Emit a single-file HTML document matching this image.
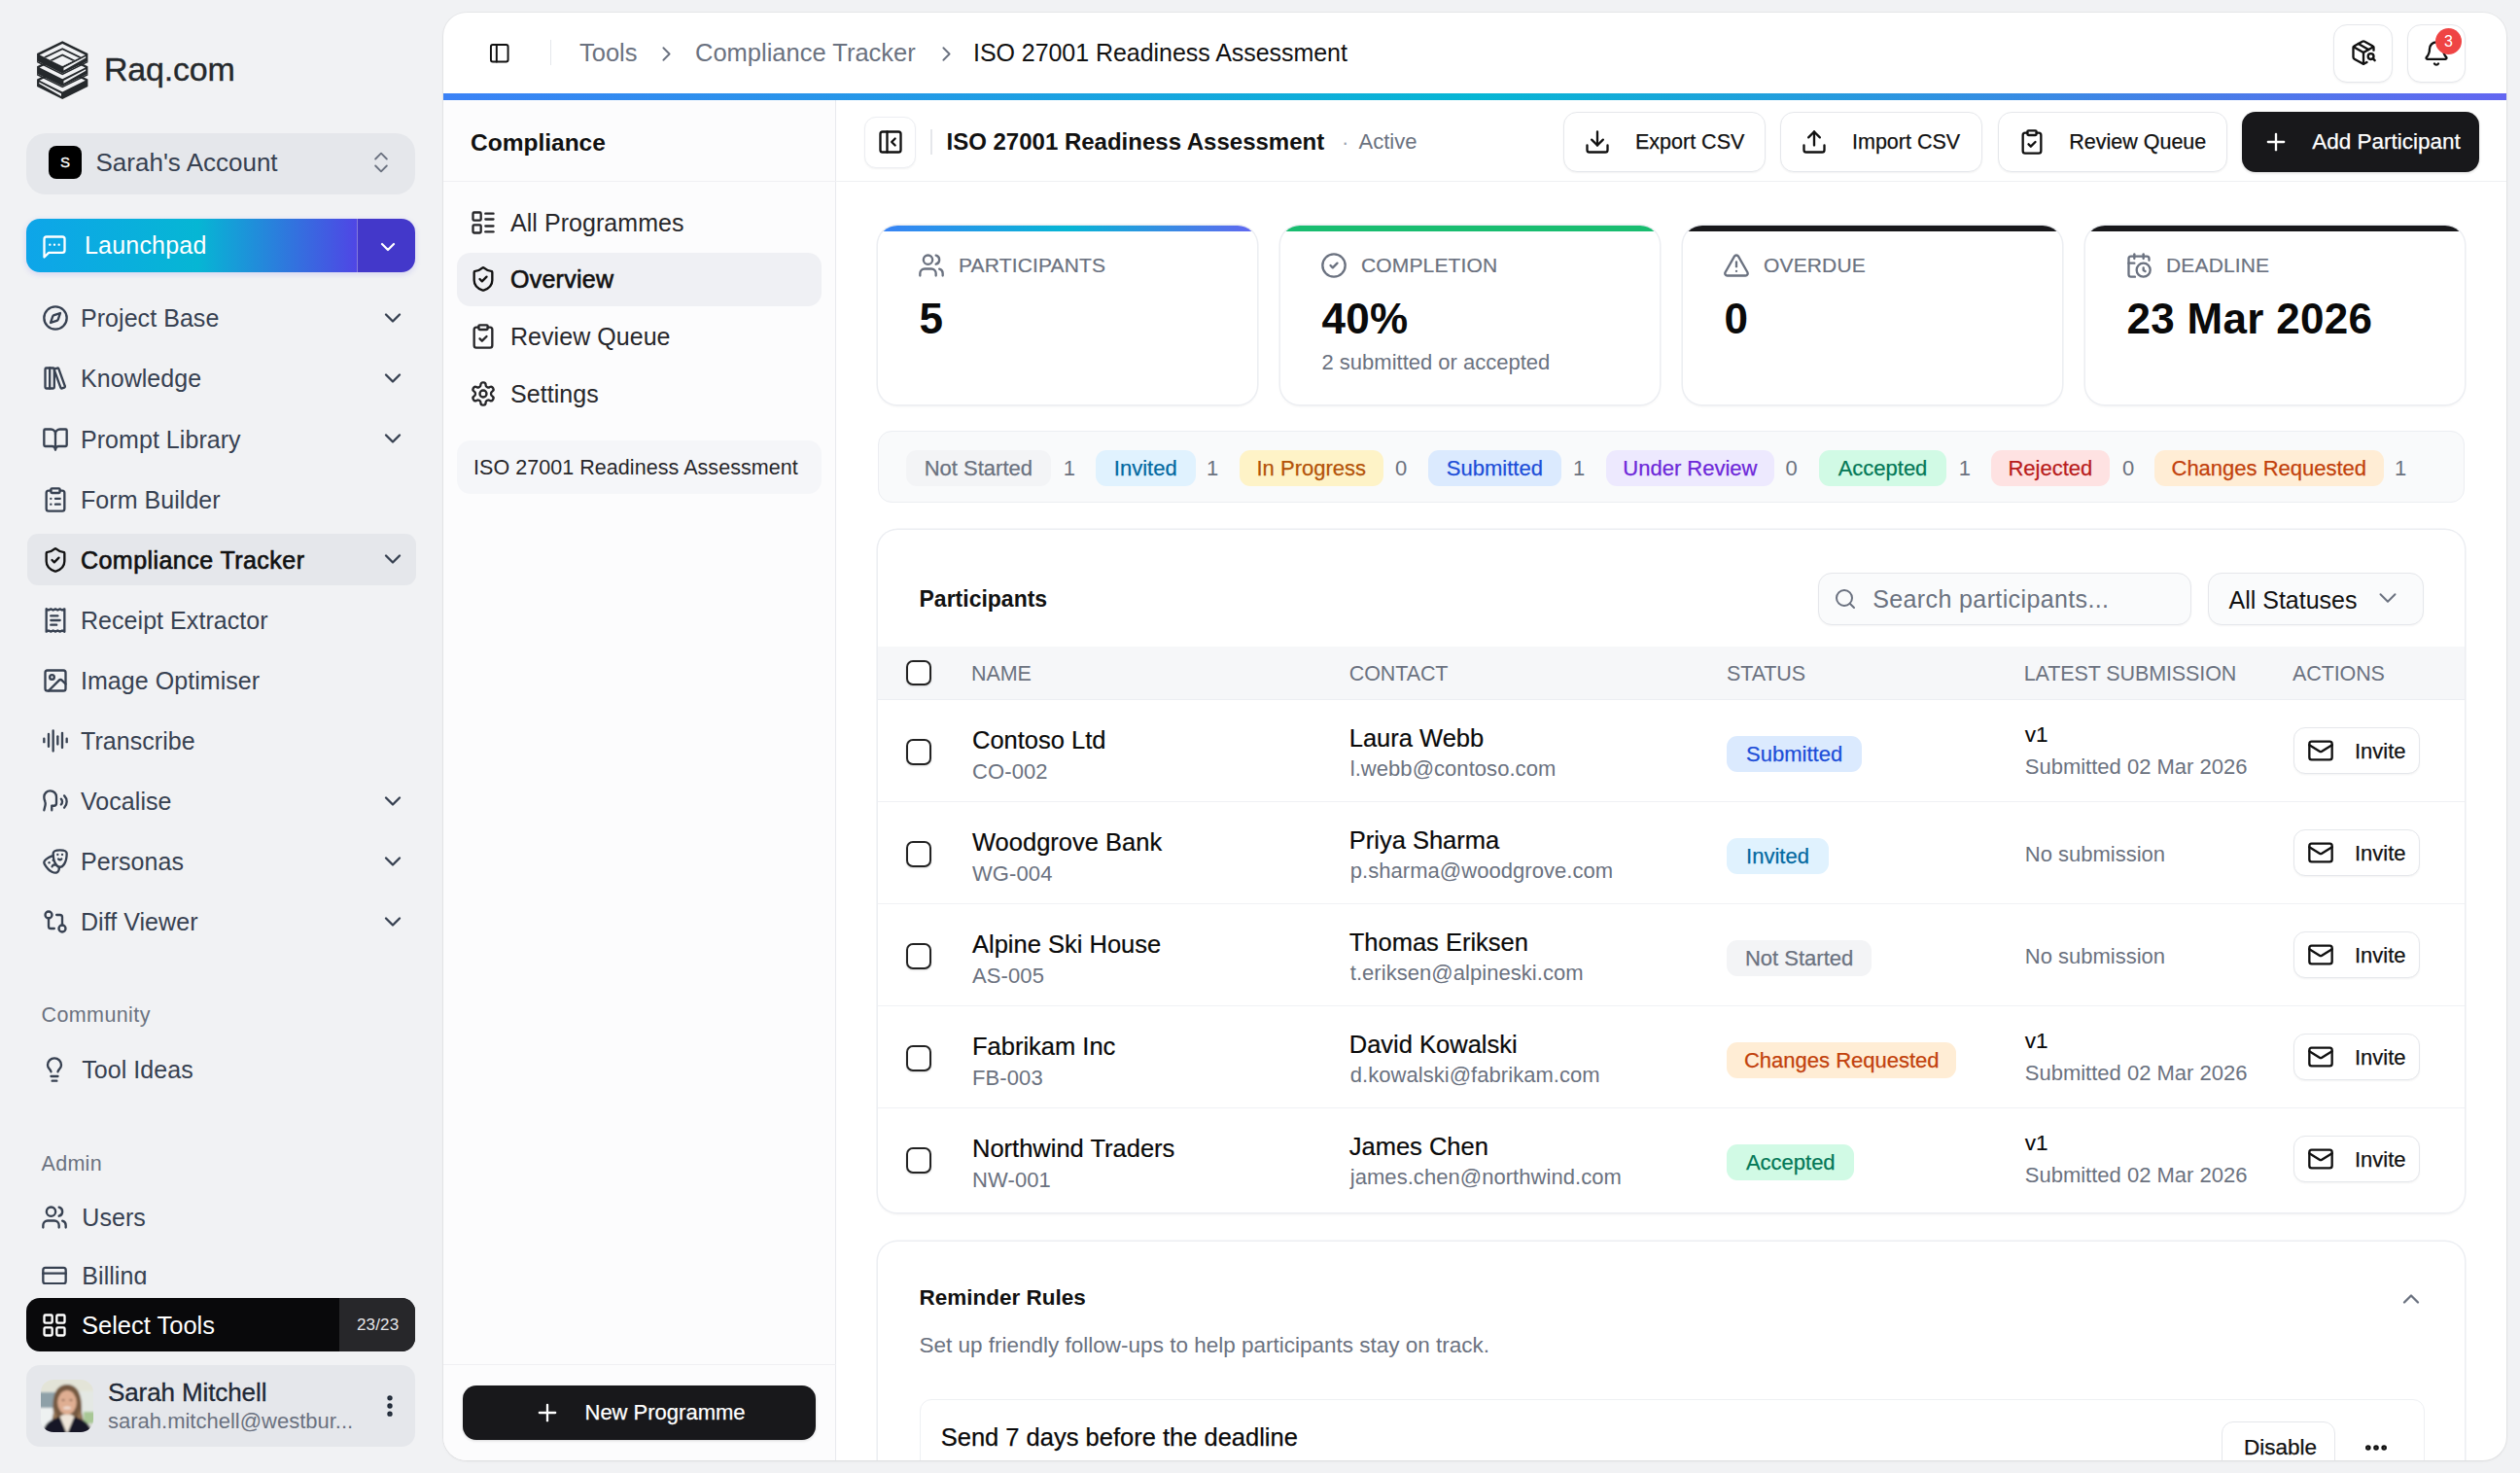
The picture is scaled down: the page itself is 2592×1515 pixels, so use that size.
<!DOCTYPE html><html><head><meta charset="utf-8"><style>
html,body{margin:0;padding:0;width:2592px;height:1515px;overflow:hidden;background:#f1f2f4;font-family:"Liberation Sans",sans-serif;}
*{box-sizing:border-box}
</style></head><body>
<svg style="position:absolute;left:30px;top:36px;width:70px;height:72px" viewBox="0 0 70 72"><g transform="scale(0.048876)" stroke="none"><polygon fill="#25292c" points="700.0,670.0 1235.0,930.0 1235.0,1085.0 700.0,1350.0 165.0,1085.0 165.0,930.0"/><polygon fill="#f1f2f4" points="700.0,722.5 1181.5,956.5 700.0,1195.0 218.5,956.5"/><polygon fill="#f1f2f4" points="210.0,990.0 675.0,1233.0 675.0,1288.0 210.0,1023.0"/><polygon fill="#25292c" points="700.0,400.0 1235.0,660.0 1235.0,815.0 700.0,1080.0 165.0,815.0 165.0,660.0"/><polygon fill="#f1f2f4" points="700.0,452.5 1181.5,686.5 700.0,925.0 218.5,686.5"/><polygon fill="#f1f2f4" points="725.0,963.0 1190.0,720.0 1190.0,753.0 725.0,1018.0"/><polygon fill="#25292c" points="165.0,815.0 700.0,1080.0 1235.0,815.0 1235.0,847.0 700.0,1112.0 165.0,847.0"/><polygon fill="#25292c" points="700.0,130.0 1235.0,390.0 1235.0,545.0 700.0,810.0 165.0,545.0 165.0,390.0"/><polygon fill="#f1f2f4" points="700.0,185.1 1178.8,417.8 700.0,655.0 221.2,417.8"/><polygon fill="#25292c" points="700.0,270.2 1092.2,460.8 700.0,655.0 307.8,460.8"/><polygon fill="#f1f2f4" points="700.0,310.1 1051.5,480.9 700.0,655.0 348.5,480.9"/><polygon fill="#25292c" points="700.0,399.9 960.0,526.2 700.0,655.0 440.0,526.2"/><polygon fill="#f1f2f4" points="700.0,439.8 919.4,546.4 700.0,655.0 480.6,546.4"/><polygon fill="#f1f2f4" points="725.0,693.0 1190.0,450.0 1190.0,483.0 725.0,748.0"/><polygon fill="#25292c" points="165.0,545.0 700.0,810.0 1235.0,545.0 1235.0,577.0 700.0,842.0 165.0,577.0"/></g></svg>
<div style="position:absolute;left:107.00px;top:44.30px;height:54px;line-height:54px;font-size:34px;color:#25292c;font-weight:400;letter-spacing:-0.2px;white-space:nowrap;-webkit-text-stroke:0.35px #25292c;">Raq.com</div>
<div style="position:absolute;left:27px;top:136.5px;width:400px;height:63px;box-sizing:border-box;background:#e5e7eb;border-radius:20px;"></div>
<div style="position:absolute;left:50px;top:150px;width:34px;height:34px;box-sizing:border-box;background:#000;border-radius:8px;"></div>
<div style="position:absolute;left:50.00px;top:155.20px;height:24px;line-height:24px;font-size:15px;color:#fff;font-weight:400;letter-spacing:0px;white-space:nowrap;width:34px;text-align:center;-webkit-text-stroke:0.3px #fff;">S</div>
<div style="position:absolute;left:98.50px;top:146.70px;height:41px;line-height:41px;font-size:26px;color:#374151;font-weight:400;letter-spacing:0px;white-space:nowrap;">Sarah's Account</div>
<svg style="position:absolute;left:378px;top:152.5px;width:28px;height:28px" viewBox="0 0 24 24" fill="none" stroke="#6b7280" stroke-width="1.6" stroke-linecap="round" stroke-linejoin="round"><path d="m7 15 5 5 5-5"/><path d="m7 9 5-5 5 5"/></svg>
<div style="position:absolute;left:27px;top:225px;width:400px;height:55px;border-radius:14px;overflow:hidden;box-shadow:0 2px 6px rgba(79,70,229,0.18)"><div style="position:absolute;left:0;top:0;width:340px;height:55px;background:linear-gradient(90deg,#0ea5e9 0%,#06b6d4 52%,#4f46e5 100%)"></div><div style="position:absolute;left:340px;top:0;width:60px;height:55px;background:#4338ca;border-left:1px solid rgba(255,255,255,0.35)"></div></div>
<svg style="position:absolute;left:41.5px;top:239.5px;width:28px;height:28px" viewBox="0 0 24 24" fill="none" stroke="#fff" stroke-width="2" stroke-linecap="round" stroke-linejoin="round"><path d="M21 15a2 2 0 0 1-2 2H7l-4 4V5a2 2 0 0 1 2-2h14a2 2 0 0 1 2 2z"/><path d="M8 10h.01"/><path d="M12 10h.01"/><path d="M16 10h.01"/></svg>
<div style="position:absolute;left:87.00px;top:232.30px;height:40px;line-height:40px;font-size:25px;color:#fff;font-weight:400;letter-spacing:0.2px;white-space:nowrap;">Launchpad</div>
<svg style="position:absolute;left:387px;top:241.5px;width:24px;height:24px" viewBox="0 0 24 24" fill="none" stroke="#fff" stroke-width="2.2" stroke-linecap="round" stroke-linejoin="round"><path d="m6 9 6 6 6-6"/></svg>
<svg style="position:absolute;left:42.5px;top:313.3px;width:28px;height:28px" viewBox="0 0 24 24" fill="none" stroke="#374151" stroke-width="2" stroke-linecap="round" stroke-linejoin="round"><circle cx="12" cy="12" r="10"/><path d="m16.24 7.76-1.804 5.411a2 2 0 0 1-1.265 1.265L7.76 16.24l1.804-5.411a2 2 0 0 1 1.265-1.265z"/></svg>
<div style="position:absolute;left:83.00px;top:307.30px;height:40px;line-height:40px;font-size:25px;color:#374151;font-weight:400;letter-spacing:0.05px;white-space:nowrap;">Project Base</div>
<svg style="position:absolute;left:390px;top:312.8px;width:28px;height:28px" viewBox="0 0 24 24" fill="none" stroke="#374151" stroke-width="2" stroke-linecap="round" stroke-linejoin="round"><path d="m6 9 6 6 6-6"/></svg>
<svg style="position:absolute;left:42.5px;top:375.40000000000003px;width:28px;height:28px" viewBox="0 0 24 24" fill="none" stroke="#374151" stroke-width="2" stroke-linecap="round" stroke-linejoin="round"><rect width="8" height="18" x="3" y="3" rx="1"/><path d="M7 3v18"/><path d="M20.4 18.9c.2.5-.1 1.1-.6 1.3l-1.9.7c-.5.2-1.1-.1-1.3-.6L11.1 5.1c-.2-.5.1-1.1.6-1.3l1.9-.7c.5-.2 1.1.1 1.3.6Z"/></svg>
<div style="position:absolute;left:83.00px;top:369.40px;height:40px;line-height:40px;font-size:25px;color:#374151;font-weight:400;letter-spacing:0.05px;white-space:nowrap;">Knowledge</div>
<svg style="position:absolute;left:390px;top:374.90000000000003px;width:28px;height:28px" viewBox="0 0 24 24" fill="none" stroke="#374151" stroke-width="2" stroke-linecap="round" stroke-linejoin="round"><path d="m6 9 6 6 6-6"/></svg>
<svg style="position:absolute;left:42.5px;top:437.5px;width:28px;height:28px" viewBox="0 0 24 24" fill="none" stroke="#374151" stroke-width="2" stroke-linecap="round" stroke-linejoin="round"><path d="M12 7v14"/><path d="M3 18a1 1 0 0 1-1-1V4a1 1 0 0 1 1-1h5a4 4 0 0 1 4 4 4 4 0 0 1 4-4h5a1 1 0 0 1 1 1v13a1 1 0 0 1-1 1h-6a3 3 0 0 0-3 3 3 3 0 0 0-3-3z"/></svg>
<div style="position:absolute;left:83.00px;top:431.50px;height:40px;line-height:40px;font-size:25px;color:#374151;font-weight:400;letter-spacing:0.05px;white-space:nowrap;">Prompt Library</div>
<svg style="position:absolute;left:390px;top:437.0px;width:28px;height:28px" viewBox="0 0 24 24" fill="none" stroke="#374151" stroke-width="2" stroke-linecap="round" stroke-linejoin="round"><path d="m6 9 6 6 6-6"/></svg>
<svg style="position:absolute;left:42.5px;top:499.6px;width:28px;height:28px" viewBox="0 0 24 24" fill="none" stroke="#374151" stroke-width="2" stroke-linecap="round" stroke-linejoin="round"><rect width="8" height="4" x="8" y="2" rx="1" ry="1"/><path d="M16 4h2a2 2 0 0 1 2 2v14a2 2 0 0 1-2 2H6a2 2 0 0 1-2-2V6a2 2 0 0 1 2-2h2"/><path d="M12 11h4"/><path d="M12 16h4"/><path d="M8 11h.01"/><path d="M8 16h.01"/></svg>
<div style="position:absolute;left:83.00px;top:493.60px;height:40px;line-height:40px;font-size:25px;color:#374151;font-weight:400;letter-spacing:0.05px;white-space:nowrap;">Form Builder</div>
<div style="position:absolute;left:27.5px;top:549.2px;width:400px;height:53px;box-sizing:border-box;background:#e5e7eb;border-radius:11px;"></div>
<svg style="position:absolute;left:42.5px;top:561.7px;width:28px;height:28px" viewBox="0 0 24 24" fill="none" stroke="#111" stroke-width="2" stroke-linecap="round" stroke-linejoin="round"><path d="M20 13c0 5-3.5 7.5-7.66 8.95a1 1 0 0 1-.67-.01C7.5 20.5 4 18 4 13V6a1 1 0 0 1 1-1c2 0 4.5-1.2 6.24-2.72a1.17 1.17 0 0 1 1.52 0C14.51 3.810 17 5 19 5a1 1 0 0 1 1 1z"/><path d="m9 12 2 2 4-4"/></svg>
<div style="position:absolute;left:83.00px;top:555.70px;height:40px;line-height:40px;font-size:25px;color:#111;font-weight:400;letter-spacing:0.45px;white-space:nowrap;-webkit-text-stroke:0.65px #111;">Compliance Tracker</div>
<svg style="position:absolute;left:390px;top:561.2px;width:28px;height:28px" viewBox="0 0 24 24" fill="none" stroke="#374151" stroke-width="2" stroke-linecap="round" stroke-linejoin="round"><path d="m6 9 6 6 6-6"/></svg>
<svg style="position:absolute;left:42.5px;top:623.8px;width:28px;height:28px" viewBox="0 0 24 24" fill="none" stroke="#374151" stroke-width="2" stroke-linecap="round" stroke-linejoin="round"><path d="M4 2v20l2-1 2 1 2-1 2 1 2-1 2 1 2-1 2 1V2l-2 1-2-1-2 1-2-1-2 1-2-1-2 1Z"/><path d="M14 8H8"/><path d="M16 12H8"/><path d="M13 16H8"/></svg>
<div style="position:absolute;left:83.00px;top:617.80px;height:40px;line-height:40px;font-size:25px;color:#374151;font-weight:400;letter-spacing:0.05px;white-space:nowrap;">Receipt Extractor</div>
<svg style="position:absolute;left:42.5px;top:685.9000000000001px;width:28px;height:28px" viewBox="0 0 24 24" fill="none" stroke="#374151" stroke-width="2" stroke-linecap="round" stroke-linejoin="round"><rect width="18" height="18" x="3" y="3" rx="2" ry="2"/><circle cx="9" cy="9" r="2"/><path d="m21 15-3.086-3.086a2 2 0 0 0-2.828 0L6 21"/></svg>
<div style="position:absolute;left:83.00px;top:679.90px;height:40px;line-height:40px;font-size:25px;color:#374151;font-weight:400;letter-spacing:0.05px;white-space:nowrap;">Image Optimiser</div>
<svg style="position:absolute;left:42.5px;top:748.0px;width:28px;height:28px" viewBox="0 0 24 24" fill="none" stroke="#374151" stroke-width="2" stroke-linecap="round" stroke-linejoin="round"><path d="M2 10v3"/><path d="M6 6v11"/><path d="M10 3v18"/><path d="M14 8v7"/><path d="M18 5v13"/><path d="M22 10v3"/></svg>
<div style="position:absolute;left:83.00px;top:742.00px;height:40px;line-height:40px;font-size:25px;color:#374151;font-weight:400;letter-spacing:0.05px;white-space:nowrap;">Transcribe</div>
<svg style="position:absolute;left:42.5px;top:810.1px;width:28px;height:28px" viewBox="0 0 24 24" fill="none" stroke="#374151" stroke-width="2" stroke-linecap="round" stroke-linejoin="round"><path d="M8.8 20v-4.1l1.9.2a2.3 2.3 0 0 0 2.164-2.1V8.3A5.37 5.37 0 0 0 2 8.25c0 2.8.656 3.054 1 4.55a5.770 5.770 0 0 1 .029 2.758L2 20"/><path d="M19.8 17.8a7.5 7.5 0 0 0 .003-10.603"/><path d="M17 15a3.5 3.5 0 0 0-.025-4.975"/></svg>
<div style="position:absolute;left:83.00px;top:804.10px;height:40px;line-height:40px;font-size:25px;color:#374151;font-weight:400;letter-spacing:0.05px;white-space:nowrap;">Vocalise</div>
<svg style="position:absolute;left:390px;top:809.6px;width:28px;height:28px" viewBox="0 0 24 24" fill="none" stroke="#374151" stroke-width="2" stroke-linecap="round" stroke-linejoin="round"><path d="m6 9 6 6 6-6"/></svg>
<svg style="position:absolute;left:42.5px;top:872.2px;width:28px;height:28px" viewBox="0 0 24 24" fill="none" stroke="#374151" stroke-width="2" stroke-linecap="round" stroke-linejoin="round"><path d="M10 11h.01"/><path d="M14 6h.01"/><path d="M18 6h.01"/><path d="M6.5 13.1h.01"/><path d="M22 5c0 9-4 12-6 12s-6-3-6-12c0-2 2-3 6-3s6 1 6 3"/><path d="M17.4 9.9c-.8.8-2 .8-2.8 0"/><path d="M10.1 7.1C9 7.2 7.7 7.7 6 8.6c-3.5 2-4.7 3.9-3.7 5.6 4.5 7.8 9.5 8.4 11.2 7.4.9-.5 1.9-2.1 1.9-4.7"/><path d="M9.1 16.5c.3-1.1 1.4-1.700 2.4-1.400"/></svg>
<div style="position:absolute;left:83.00px;top:866.20px;height:40px;line-height:40px;font-size:25px;color:#374151;font-weight:400;letter-spacing:0.05px;white-space:nowrap;">Personas</div>
<svg style="position:absolute;left:390px;top:871.7px;width:28px;height:28px" viewBox="0 0 24 24" fill="none" stroke="#374151" stroke-width="2" stroke-linecap="round" stroke-linejoin="round"><path d="m6 9 6 6 6-6"/></svg>
<svg style="position:absolute;left:42.5px;top:934.3px;width:28px;height:28px" viewBox="0 0 24 24" fill="none" stroke="#374151" stroke-width="2" stroke-linecap="round" stroke-linejoin="round"><circle cx="18" cy="18" r="3"/><circle cx="6" cy="6" r="3"/><path d="M13 6h3a2 2 0 0 1 2 2v7"/><path d="M11 18H8a2 2 0 0 1-2-2V9"/></svg>
<div style="position:absolute;left:83.00px;top:928.30px;height:40px;line-height:40px;font-size:25px;color:#374151;font-weight:400;letter-spacing:0.05px;white-space:nowrap;">Diff Viewer</div>
<svg style="position:absolute;left:390px;top:933.8px;width:28px;height:28px" viewBox="0 0 24 24" fill="none" stroke="#374151" stroke-width="2" stroke-linecap="round" stroke-linejoin="round"><path d="m6 9 6 6 6-6"/></svg>
<div style="position:absolute;left:42.50px;top:1026.50px;height:34px;line-height:34px;font-size:21.5px;color:#6b7280;font-weight:400;letter-spacing:0.4px;white-space:nowrap;">Community</div>
<svg style="position:absolute;left:42px;top:1085.5px;width:28px;height:28px" viewBox="0 0 24 24" fill="none" stroke="#374151" stroke-width="2" stroke-linecap="round" stroke-linejoin="round"><path d="M15 14c.2-1 .7-1.7 1.5-2.5 1-.9 1.5-2.2 1.5-3.5A6 6 0 0 0 6 8c0 1 .2 2.2 1.5 3.5.7.7 1.3 1.5 1.5 2.5"/><path d="M9 18h6"/><path d="M10 22h4"/></svg>
<div style="position:absolute;left:84.30px;top:1079.60px;height:40px;line-height:40px;font-size:25px;color:#374151;font-weight:400;letter-spacing:0.05px;white-space:nowrap;">Tool Ideas</div>
<div style="position:absolute;left:42.50px;top:1179.80px;height:34px;line-height:34px;font-size:21.5px;color:#6b7280;font-weight:400;letter-spacing:0.3px;white-space:nowrap;">Admin</div>
<svg style="position:absolute;left:42px;top:1237.5px;width:28px;height:28px" viewBox="0 0 24 24" fill="none" stroke="#374151" stroke-width="2" stroke-linecap="round" stroke-linejoin="round"><path d="M16 21v-2a4 4 0 0 0-4-4H6a4 4 0 0 0-4 4v2"/><circle cx="9" cy="7" r="4"/><path d="M22 21v-2a4 4 0 0 0-3-3.87"/><path d="M16 3.13a4 4 0 0 1 0 7.75"/></svg>
<div style="position:absolute;left:84.30px;top:1231.70px;height:40px;line-height:40px;font-size:25px;color:#374151;font-weight:400;letter-spacing:0.05px;white-space:nowrap;">Users</div>
<div style="position:absolute;left:0;top:1280px;width:456px;height:41px;overflow:hidden">
<svg style="position:absolute;left:42px;top:18px;width:28px;height:28px" viewBox="0 0 24 24" fill="none" stroke="#374151" stroke-width="2" stroke-linecap="round" stroke-linejoin="round"><rect width="20" height="14" x="2" y="5" rx="2"/><path d="M2 10h20"/></svg>
<div style="position:absolute;left:84.30px;top:12.00px;height:40px;line-height:40px;font-size:25px;color:#374151;font-weight:400;letter-spacing:0.05px;white-space:nowrap;">Billing</div>
</div>
<div style="position:absolute;left:27px;top:1335px;width:400px;height:55px;border-radius:14px;overflow:hidden;background:#09090b"><div style="position:absolute;left:322px;top:0;width:78px;height:55px;background:#27272a"></div></div>
<svg style="position:absolute;left:42px;top:1348.5px;width:28px;height:28px" viewBox="0 0 24 24" fill="none" stroke="#fff" stroke-width="2" stroke-linecap="round" stroke-linejoin="round"><rect width="7" height="7" x="3" y="3" rx="1"/><rect width="7" height="7" x="14" y="3" rx="1"/><rect width="7" height="7" x="14" y="14" rx="1"/><rect width="7" height="7" x="3" y="14" rx="1"/></svg>
<div style="position:absolute;left:84.00px;top:1342.50px;height:40px;line-height:40px;font-size:25.5px;color:#fff;font-weight:400;letter-spacing:0px;white-space:nowrap;">Select Tools</div>
<div style="position:absolute;left:367.00px;top:1349.00px;height:27px;line-height:27px;font-size:17px;color:#e4e4e7;font-weight:400;letter-spacing:0.15px;white-space:nowrap;">23/23</div>
<div style="position:absolute;left:27px;top:1404px;width:400px;height:84px;box-sizing:border-box;background:#e5e7eb;border-radius:14px;"></div>
<svg style="position:absolute;left:42px;top:1419px;width:54px;height:54px" viewBox="0 0 54 54">
<defs><clipPath id="av"><rect width="54" height="54" rx="13"/></clipPath><filter id="bl" x="-10%" y="-10%" width="120%" height="120%"><feGaussianBlur stdDeviation="0.9"/></filter></defs>
<g clip-path="url(#av)"><g filter="url(#bl)">
<rect x="-2" y="-2" width="58" height="58" fill="#dcdfd8"/>
<rect x="-2" y="-2" width="58" height="14" fill="#e3e4d8"/>
<rect x="-2" y="13" width="17" height="16" fill="#8ea0a8"/>
<rect x="-2" y="29" width="16" height="27" fill="#eef1f1"/>
<rect x="36" y="12" width="20" height="30" fill="#e4e8e4"/>
<rect x="44" y="33" width="12" height="12" fill="#a8c795"/>
<path d="M13 34 C11 14 17 5 27 5 C37 5 43 14 42 34 L44 44 L11 44 Z" fill="#75593f"/>
<path d="M14 30 C13 38 13 42 12 44 L18 44 Z" fill="#9c7b58"/>
<path d="M40 30 C41 38 42 42 44 44 L37 44 Z" fill="#9c7b58"/>
<ellipse cx="27" cy="23.5" rx="9.8" ry="12.5" fill="#dfae92"/>
<path d="M2 56 C3 45 10 41 19 38.5 L27 44 L35 38.5 C44 41 51 45 53 56 Z" fill="#121826"/>
<path d="M19.5 38 L27 56 L34.5 38 L31 36 L23 36 Z" fill="#eee5d9"/>
<ellipse cx="27" cy="29" rx="4" ry="1.6" fill="#f4e9e4" opacity="0.8"/><ellipse cx="23" cy="21" rx="1.6" ry="0.9" fill="#6b4a3a" opacity="0.7"/><ellipse cx="31" cy="21" rx="1.6" ry="0.9" fill="#6b4a3a" opacity="0.7"/>
</g></g></svg>
<div style="position:absolute;left:111.00px;top:1412.30px;height:41px;line-height:41px;font-size:26px;color:#1f2937;font-weight:400;letter-spacing:-0.1px;white-space:nowrap;-webkit-text-stroke:0.3px #1f2937;">Sarah Mitchell</div>
<div style="position:absolute;left:111.00px;top:1443.50px;height:35px;line-height:35px;font-size:22px;color:#6b7280;font-weight:400;letter-spacing:0px;white-space:nowrap;">sarah.mitchell@westbur...</div>
<svg style="position:absolute;left:387px;top:1431.5px;width:28px;height:28px" viewBox="0 0 24 24" fill="none" stroke="#1f2937" stroke-width="2.6" stroke-linecap="round" stroke-linejoin="round"><circle cx="12" cy="12" r="1"/><circle cx="12" cy="5" r="1"/><circle cx="12" cy="19" r="1"/></svg>
<div style="position:absolute;left:455.5px;top:13px;width:2122.5px;height:1488.5px;background:#fff;border-radius:24px;box-shadow:0 0 0 1px rgba(0,0,0,0.04),0 1px 3px rgba(0,0,0,0.06);overflow:hidden">
<div style="position:absolute;left:-455.5px;top:-13px;width:2592px;height:1515px">
<svg style="position:absolute;left:501.5px;top:42.5px;width:23.5px;height:23.5px" viewBox="0 0 24 24" fill="none" stroke="#111" stroke-width="2" stroke-linecap="round" stroke-linejoin="round"><rect width="18" height="18" x="3" y="3" rx="2"/><path d="M9 3v18"/></svg>
<div style="position:absolute;left:565.5px;top:41px;width:1.5px;height:26px;box-sizing:border-box;background:#e5e7eb;"></div>
<div style="position:absolute;left:596.00px;top:34.20px;height:40px;line-height:40px;font-size:25.5px;color:#6b7280;font-weight:400;letter-spacing:0px;white-space:nowrap;">Tools</div>
<svg style="position:absolute;left:672.5px;top:42.5px;width:25px;height:25px" viewBox="0 0 24 24" fill="none" stroke="#6b7280" stroke-width="1.8" stroke-linecap="round" stroke-linejoin="round"><path d="m9 18 6-6-6-6"/></svg>
<div style="position:absolute;left:715.00px;top:34.20px;height:40px;line-height:40px;font-size:25.5px;color:#6b7280;font-weight:400;letter-spacing:0px;white-space:nowrap;">Compliance Tracker</div>
<svg style="position:absolute;left:960.5px;top:42.5px;width:25px;height:25px" viewBox="0 0 24 24" fill="none" stroke="#6b7280" stroke-width="1.8" stroke-linecap="round" stroke-linejoin="round"><path d="m9 18 6-6-6-6"/></svg>
<div style="position:absolute;left:1001.00px;top:34.20px;height:40px;line-height:40px;font-size:25px;color:#111;font-weight:400;letter-spacing:-0.05px;white-space:nowrap;">ISO 27001 Readiness Assessment</div>
<div style="position:absolute;left:2399.5px;top:24.5px;width:61px;height:60px;box-sizing:border-box;border:1.5px solid #e5e7eb;border-radius:14px;background:#fff;box-shadow:0 1px 2px rgba(0,0,0,0.05);"></div>
<svg style="position:absolute;left:2416.5px;top:40px;width:28px;height:28px" viewBox="0 0 24 24" fill="none" stroke="#111" stroke-width="2" stroke-linecap="round" stroke-linejoin="round"><path d="M21 10V8a2 2 0 0 0-1-1.73l-7-4a2 2 0 0 0-2 0l-7 4A2 2 0 0 0 3 8v8a2 2 0 0 0 1 1.73l7 4a2 2 0 0 0 2 0l2-1.14"/><path d="m7.5 4.27 9 5.15"/><polyline points="3.29 7 12 12 20.71 7"/><line x1="12" x2="12" y1="22" y2="12"/><circle cx="18.5" cy="15.5" r="2.5"/><path d="M20.27 17.27 22 19"/></svg>
<div style="position:absolute;left:2475.5px;top:24.5px;width:60px;height:60px;box-sizing:border-box;border:1.5px solid #e5e7eb;border-radius:14px;background:#fff;box-shadow:0 1px 2px rgba(0,0,0,0.05);"></div>
<svg style="position:absolute;left:2492px;top:40.5px;width:28px;height:28px" viewBox="0 0 24 24" fill="none" stroke="#111" stroke-width="2" stroke-linecap="round" stroke-linejoin="round"><path d="M10.268 21a2 2 0 0 0 3.464 0"/><path d="M3.262 15.326A1 1 0 0 0 4 17h16a1 1 0 0 0 .74-1.673C19.41 13.956 18 12.499 18 8A6 6 0 0 0 6 8c0 4.499-1.411 5.956-2.738 7.326"/></svg>
<div style="position:absolute;left:2505px;top:28.5px;width:27px;height:27px;box-sizing:border-box;background:#ef4444;border-radius:50%;"></div>
<div style="position:absolute;left:2505.00px;top:29.80px;height:25px;line-height:25px;font-size:16px;color:#fff;font-weight:400;letter-spacing:0px;white-space:nowrap;width:27px;text-align:center;">3</div>
<div style="position:absolute;left:455.5px;top:96px;width:2123px;height:7px;box-sizing:border-box;background:linear-gradient(90deg,#3b82f6 0%,#06b6d4 50%,#6366f1 100%);"></div>
<div style="position:absolute;left:455.5px;top:103px;width:404.5px;height:1400px;box-sizing:border-box;background:#fcfcfd;border-right:1.5px solid #e8e9ee;"></div>
<div style="position:absolute;left:455.5px;top:185.5px;width:404.5px;height:1.5px;box-sizing:border-box;background:#eff0f3;"></div>
<div style="position:absolute;left:484.00px;top:127.00px;height:39px;line-height:39px;font-size:24.5px;color:#111;font-weight:700;letter-spacing:0px;white-space:nowrap;">Compliance</div>
<svg style="position:absolute;left:483px;top:214.6px;width:28px;height:28px" viewBox="0 0 24 24" fill="none" stroke="#27272a" stroke-width="2" stroke-linecap="round" stroke-linejoin="round"><rect width="7" height="7" x="3" y="3" rx="1"/><rect width="7" height="7" x="3" y="14" rx="1"/><path d="M14 4h7"/><path d="M14 9h7"/><path d="M14 15h7"/><path d="M14 20h7"/></svg>
<div style="position:absolute;left:525.00px;top:208.60px;height:40px;line-height:40px;font-size:25px;color:#27272a;font-weight:400;letter-spacing:0.05px;white-space:nowrap;">All Programmes</div>
<div style="position:absolute;left:469.5px;top:260px;width:375px;height:54.5px;box-sizing:border-box;background:#eff0f4;border-radius:14px;"></div>
<svg style="position:absolute;left:483px;top:273.4px;width:28px;height:28px" viewBox="0 0 24 24" fill="none" stroke="#111" stroke-width="2" stroke-linecap="round" stroke-linejoin="round"><path d="M20 13c0 5-3.5 7.5-7.66 8.95a1 1 0 0 1-.67-.01C7.5 20.5 4 18 4 13V6a1 1 0 0 1 1-1c2 0 4.5-1.2 6.24-2.72a1.17 1.17 0 0 1 1.52 0C14.51 3.810 17 5 19 5a1 1 0 0 1 1 1z"/><path d="m9 12 2 2 4-4"/></svg>
<div style="position:absolute;left:525.00px;top:267.40px;height:40px;line-height:40px;font-size:25px;color:#111;font-weight:400;letter-spacing:0.25px;white-space:nowrap;-webkit-text-stroke:0.65px #111;">Overview</div>
<svg style="position:absolute;left:483px;top:332.2px;width:28px;height:28px" viewBox="0 0 24 24" fill="none" stroke="#27272a" stroke-width="2" stroke-linecap="round" stroke-linejoin="round"><rect width="8" height="4" x="8" y="2" rx="1" ry="1"/><path d="M16 4h2a2 2 0 0 1 2 2v14a2 2 0 0 1-2 2H6a2 2 0 0 1-2-2V6a2 2 0 0 1 2-2h2"/><path d="m9 14 2 2 4-4"/></svg>
<div style="position:absolute;left:525.00px;top:326.20px;height:40px;line-height:40px;font-size:25px;color:#27272a;font-weight:400;letter-spacing:0.05px;white-space:nowrap;">Review Queue</div>
<svg style="position:absolute;left:483px;top:391px;width:28px;height:28px" viewBox="0 0 24 24" fill="none" stroke="#27272a" stroke-width="2" stroke-linecap="round" stroke-linejoin="round"><path d="M12.22 2h-.44a2 2 0 0 0-2 2v.18a2 2 0 0 1-1 1.73l-.43.25a2 2 0 0 1-2 0l-.15-.08a2 2 0 0 0-2.730.73l-.22.38a2 2 0 0 0 .73 2.73l.15.1a2 2 0 0 1 1 1.72v.51a2 2 0 0 1-1 1.74l-.15.09a2 2 0 0 0-.73 2.73l.22.38a2 2 0 0 0 2.73.73l.15-.08a2 2 0 0 1 2 0l.43.25a2 2 0 0 1 1 1.73V20a2 2 0 0 0 2 2h.44a2 2 0 0 0 2-2v-.18a2 2 0 0 1 1-1.73l.43-.25a2 2 0 0 1 2 0l.15.08a2 2 0 0 0 2.73-.73l.22-.39a2 2 0 0 0-.73-2.73l-.15-.08a2 2 0 0 1-1-1.74v-.5a2 2 0 0 1 1-1.74l.15-.09a2 2 0 0 0 .73-2.73l-.22-.38a2 2 0 0 0-2.73-.73l-.15.08a2 2 0 0 1-2 0l-.43-.25a2 2 0 0 1-1-1.73V4a2 2 0 0 0-2-2z"/><circle cx="12" cy="12" r="3"/></svg>
<div style="position:absolute;left:525.00px;top:385.00px;height:40px;line-height:40px;font-size:25px;color:#27272a;font-weight:400;letter-spacing:0.05px;white-space:nowrap;">Settings</div>
<div style="position:absolute;left:469.5px;top:453.3px;width:375px;height:55px;box-sizing:border-box;background:#f5f6f9;border-radius:14px;"></div>
<div style="position:absolute;left:487.00px;top:463.80px;height:34px;line-height:34px;font-size:21.5px;color:#27272a;font-weight:400;letter-spacing:0.05px;white-space:nowrap;">ISO 27001 Readiness Assessment</div>
<div style="position:absolute;left:455.5px;top:1402.5px;width:404.5px;height:1.5px;box-sizing:border-box;background:#eff0f3;"></div>
<div style="position:absolute;left:475.5px;top:1425px;width:363.5px;height:55.5px;box-sizing:border-box;background:#18181b;border-radius:14px;box-shadow:0 1px 3px rgba(0,0,0,0.15);"></div>
<svg style="position:absolute;left:549px;top:1438.5px;width:28px;height:28px" viewBox="0 0 24 24" fill="none" stroke="#fff" stroke-width="2" stroke-linecap="round" stroke-linejoin="round"><path d="M5 12h14"/><path d="M12 5v14"/></svg>
<div style="position:absolute;left:601.50px;top:1434.80px;height:35px;line-height:35px;font-size:22px;color:#fff;font-weight:400;letter-spacing:0px;white-space:nowrap;-webkit-text-stroke:0.25px #fff;">New Programme</div>
<div style="position:absolute;left:860px;top:185.5px;width:1720px;height:1.5px;box-sizing:border-box;background:#eff0f3;"></div>
<div style="position:absolute;left:888.75px;top:119.5px;width:53.5px;height:53px;box-sizing:border-box;border:1.5px solid #eceef2;border-radius:12px;background:#fff;box-shadow:0 1px 2px rgba(0,0,0,0.05);"></div>
<svg style="position:absolute;left:901.5px;top:132px;width:28px;height:28px" viewBox="0 0 24 24" fill="none" stroke="#111" stroke-width="2" stroke-linecap="round" stroke-linejoin="round"><rect width="18" height="18" x="3" y="3" rx="2"/><path d="M9 3v18"/><path d="m16 15-3-3 3-3"/></svg>
<div style="position:absolute;left:957px;top:132.5px;width:1.5px;height:26px;box-sizing:border-box;background:#e5e7eb;"></div>
<div style="position:absolute;left:973.50px;top:127.20px;height:38px;line-height:38px;font-size:24px;color:#111;font-weight:700;letter-spacing:0px;white-space:nowrap;">ISO 27001 Readiness Assessment</div>
<div style="position:absolute;left:1380.00px;top:128.50px;height:35px;line-height:35px;font-size:22px;color:#9ca3af;font-weight:400;letter-spacing:0px;white-space:nowrap;">·</div>
<div style="position:absolute;left:1397.50px;top:128.20px;height:35px;line-height:35px;font-size:22px;color:#6b7280;font-weight:400;letter-spacing:0px;white-space:nowrap;">Active</div>
<div style="position:absolute;left:1607.5px;top:114.5px;width:208.5px;height:62px;box-sizing:border-box;border:1.5px solid #e5e7eb;border-radius:14px;background:#fff;box-shadow:0 1px 2px rgba(0,0,0,0.05);"></div>
<svg style="position:absolute;left:1628.5px;top:131.5px;width:28px;height:28px" viewBox="0 0 24 24" fill="none" stroke="#111" stroke-width="2" stroke-linecap="round" stroke-linejoin="round"><path d="M12 15V3"/><path d="M21 15v4a2 2 0 0 1-2 2H5a2 2 0 0 1-2-2v-4"/><path d="m7 10 5 5 5-5"/></svg>
<div style="position:absolute;left:1682.00px;top:128.70px;height:34px;line-height:34px;font-size:21.5px;color:#111;font-weight:400;letter-spacing:0px;white-space:nowrap;-webkit-text-stroke:0.25px #111;">Export CSV</div>
<div style="position:absolute;left:1830.5px;top:114.5px;width:208.5px;height:62px;box-sizing:border-box;border:1.5px solid #e5e7eb;border-radius:14px;background:#fff;box-shadow:0 1px 2px rgba(0,0,0,0.05);"></div>
<svg style="position:absolute;left:1851.5px;top:131.5px;width:28px;height:28px" viewBox="0 0 24 24" fill="none" stroke="#111" stroke-width="2" stroke-linecap="round" stroke-linejoin="round"><path d="M12 3v12"/><path d="m17 8-5-5-5 5"/><path d="M21 15v4a2 2 0 0 1-2 2H5a2 2 0 0 1-2-2v-4"/></svg>
<div style="position:absolute;left:1905.00px;top:128.70px;height:34px;line-height:34px;font-size:21.5px;color:#111;font-weight:400;letter-spacing:0px;white-space:nowrap;-webkit-text-stroke:0.25px #111;">Import CSV</div>
<div style="position:absolute;left:2054.5px;top:114.5px;width:236.5px;height:62px;box-sizing:border-box;border:1.5px solid #e5e7eb;border-radius:14px;background:#fff;box-shadow:0 1px 2px rgba(0,0,0,0.05);"></div>
<svg style="position:absolute;left:2075.5px;top:131.5px;width:28px;height:28px" viewBox="0 0 24 24" fill="none" stroke="#111" stroke-width="2" stroke-linecap="round" stroke-linejoin="round"><rect width="8" height="4" x="8" y="2" rx="1" ry="1"/><path d="M16 4h2a2 2 0 0 1 2 2v14a2 2 0 0 1-2 2H6a2 2 0 0 1-2-2V6a2 2 0 0 1 2-2h2"/><path d="m9 14 2 2 4-4"/></svg>
<div style="position:absolute;left:2128.25px;top:128.70px;height:34px;line-height:34px;font-size:21.5px;color:#111;font-weight:400;letter-spacing:0px;white-space:nowrap;-webkit-text-stroke:0.25px #111;">Review Queue</div>
<div style="position:absolute;left:2305.5px;top:114.5px;width:244.0px;height:62px;box-sizing:border-box;background:#18181b;border-radius:14px;box-shadow:0 1px 3px rgba(0,0,0,0.15);"></div>
<svg style="position:absolute;left:2326.5px;top:131.5px;width:28px;height:28px" viewBox="0 0 24 24" fill="none" stroke="#fff" stroke-width="2" stroke-linecap="round" stroke-linejoin="round"><path d="M5 12h14"/><path d="M12 5v14"/></svg>
<div style="position:absolute;left:2378.25px;top:127.70px;height:36px;line-height:36px;font-size:22.5px;color:#fff;font-weight:400;letter-spacing:0px;white-space:nowrap;-webkit-text-stroke:0.25px #fff;">Add Participant</div>
<div style="position:absolute;left:902.5px;top:231.5px;width:390.79999999999995px;height:184px;border-radius:20px;background:#fff;box-shadow:0 0 0 1.5px #eceef2,0 2px 3px rgba(0,0,0,0.06);overflow:hidden"><div style="position:absolute;left:0;top:0;right:0;height:6px;background:linear-gradient(90deg,#3b82f6,#06b6d4,#6366f1)"></div></div>
<svg style="position:absolute;left:944.0px;top:258.5px;width:28px;height:28px" viewBox="0 0 24 24" fill="none" stroke="#6b7280" stroke-width="2" stroke-linecap="round" stroke-linejoin="round"><path d="M16 21v-2a4 4 0 0 0-4-4H6a4 4 0 0 0-4 4v2"/><circle cx="9" cy="7" r="4"/><path d="M22 21v-2a4 4 0 0 0-3-3.87"/><path d="M16 3.13a4 4 0 0 1 0 7.75"/></svg>
<div style="position:absolute;left:986.00px;top:256.30px;height:33px;line-height:33px;font-size:21px;color:#6b7280;font-weight:400;letter-spacing:0.15px;white-space:nowrap;-webkit-text-stroke:0.2px #6b7280;">PARTICIPANTS</div>
<div style="position:absolute;left:945.50px;top:292.80px;height:70px;line-height:70px;font-size:44px;color:#0a0a0a;font-weight:700;letter-spacing:0.3px;white-space:nowrap;">5</div>
<div style="position:absolute;left:1316.5px;top:231.5px;width:390.5px;height:184px;border-radius:20px;background:#fff;box-shadow:0 0 0 1.5px #eceef2,0 2px 3px rgba(0,0,0,0.06);overflow:hidden"><div style="position:absolute;left:0;top:0;right:0;height:6px;background:#19bd70"></div></div>
<svg style="position:absolute;left:1358.0px;top:258.5px;width:28px;height:28px" viewBox="0 0 24 24" fill="none" stroke="#6b7280" stroke-width="2" stroke-linecap="round" stroke-linejoin="round"><circle cx="12" cy="12" r="10"/><path d="m9 12 2 2 4-4"/></svg>
<div style="position:absolute;left:1400.00px;top:256.30px;height:33px;line-height:33px;font-size:21px;color:#6b7280;font-weight:400;letter-spacing:0.15px;white-space:nowrap;-webkit-text-stroke:0.2px #6b7280;">COMPLETION</div>
<div style="position:absolute;left:1359.50px;top:292.80px;height:70px;line-height:70px;font-size:44px;color:#0a0a0a;font-weight:700;letter-spacing:0.3px;white-space:nowrap;">40%</div>
<div style="position:absolute;left:1359.50px;top:355.00px;height:35px;line-height:35px;font-size:22px;color:#6b7280;font-weight:400;letter-spacing:0px;white-space:nowrap;">2 submitted or accepted</div>
<div style="position:absolute;left:1730.5px;top:231.5px;width:390.5px;height:184px;border-radius:20px;background:#fff;box-shadow:0 0 0 1.5px #eceef2,0 2px 3px rgba(0,0,0,0.06);overflow:hidden"><div style="position:absolute;left:0;top:0;right:0;height:6px;background:#18181b"></div></div>
<svg style="position:absolute;left:1772.0px;top:258.5px;width:28px;height:28px" viewBox="0 0 24 24" fill="none" stroke="#6b7280" stroke-width="2" stroke-linecap="round" stroke-linejoin="round"><path d="m21.73 18-8-14a2 2 0 0 0-3.48 0l-8 14A2 2 0 0 0 4 21h16a2 2 0 0 0 1.73-3"/><path d="M12 9v4"/><path d="M12 17h.01"/></svg>
<div style="position:absolute;left:1814.00px;top:256.30px;height:33px;line-height:33px;font-size:21px;color:#6b7280;font-weight:400;letter-spacing:0.15px;white-space:nowrap;-webkit-text-stroke:0.2px #6b7280;">OVERDUE</div>
<div style="position:absolute;left:1773.50px;top:292.80px;height:70px;line-height:70px;font-size:44px;color:#0a0a0a;font-weight:700;letter-spacing:0.3px;white-space:nowrap;">0</div>
<div style="position:absolute;left:2144.5px;top:231.5px;width:390.5px;height:184px;border-radius:20px;background:#fff;box-shadow:0 0 0 1.5px #eceef2,0 2px 3px rgba(0,0,0,0.06);overflow:hidden"><div style="position:absolute;left:0;top:0;right:0;height:6px;background:#18181b"></div></div>
<svg style="position:absolute;left:2186.0px;top:258.5px;width:28px;height:28px" viewBox="0 0 24 24" fill="none" stroke="#6b7280" stroke-width="2" stroke-linecap="round" stroke-linejoin="round"><path d="M16 14v2.2l1.6 1"/><path d="M16 2v4"/><path d="M21 7.5V6a2 2 0 0 0-2-2H5a2 2 0 0 0-2 2v14a2 2 0 0 0 2 2h3.5"/><path d="M3 10h5"/><path d="M8 2v4"/><circle cx="16" cy="16" r="6"/></svg>
<div style="position:absolute;left:2228.00px;top:256.30px;height:33px;line-height:33px;font-size:21px;color:#6b7280;font-weight:400;letter-spacing:0.15px;white-space:nowrap;-webkit-text-stroke:0.2px #6b7280;">DEADLINE</div>
<div style="position:absolute;left:2187.50px;top:292.80px;height:70px;line-height:70px;font-size:44px;color:#0a0a0a;font-weight:700;letter-spacing:0.3px;white-space:nowrap;">23 Mar 2026</div>
<div style="position:absolute;left:902.5px;top:443px;width:1632.5px;height:74px;box-sizing:border-box;background:#f9fafb;border:1.5px solid #eceef2;border-radius:14px;"></div>
<div style="position:absolute;left:932px;top:463px;width:148.75px;height:37px;box-sizing:border-box;background:#f3f4f6;border-radius:11px;"></div>
<div style="position:absolute;left:932.00px;top:463.80px;height:35px;line-height:35px;font-size:22px;color:#6b7280;font-weight:400;letter-spacing:0px;white-space:nowrap;width:148.75px;text-align:center;-webkit-text-stroke:0.25px #6b7280;">Not Started</div>
<div style="position:absolute;left:1093.75px;top:463.80px;height:35px;line-height:35px;font-size:22px;color:#6b7280;font-weight:400;letter-spacing:0px;white-space:nowrap;">1</div>
<div style="position:absolute;left:1127px;top:463px;width:102.5px;height:37px;box-sizing:border-box;background:#e0f2fe;border-radius:11px;"></div>
<div style="position:absolute;left:1127.00px;top:463.80px;height:35px;line-height:35px;font-size:22px;color:#0369a1;font-weight:400;letter-spacing:0px;white-space:nowrap;width:102.5px;text-align:center;-webkit-text-stroke:0.25px #0369a1;">Invited</div>
<div style="position:absolute;left:1241.00px;top:463.80px;height:35px;line-height:35px;font-size:22px;color:#6b7280;font-weight:400;letter-spacing:0px;white-space:nowrap;">1</div>
<div style="position:absolute;left:1275px;top:463px;width:147.5px;height:37px;box-sizing:border-box;background:#fef3c7;border-radius:11px;"></div>
<div style="position:absolute;left:1275.00px;top:463.80px;height:35px;line-height:35px;font-size:22px;color:#b45309;font-weight:400;letter-spacing:0px;white-space:nowrap;width:147.5px;text-align:center;-webkit-text-stroke:0.25px #b45309;">In Progress</div>
<div style="position:absolute;left:1435.00px;top:463.80px;height:35px;line-height:35px;font-size:22px;color:#6b7280;font-weight:400;letter-spacing:0px;white-space:nowrap;">0</div>
<div style="position:absolute;left:1468.75px;top:463px;width:137.25px;height:37px;box-sizing:border-box;background:#dbeafe;border-radius:11px;"></div>
<div style="position:absolute;left:1468.75px;top:463.80px;height:35px;line-height:35px;font-size:22px;color:#1d4ed8;font-weight:400;letter-spacing:0px;white-space:nowrap;width:137.25px;text-align:center;-webkit-text-stroke:0.25px #1d4ed8;">Submitted</div>
<div style="position:absolute;left:1618.00px;top:463.80px;height:35px;line-height:35px;font-size:22px;color:#6b7280;font-weight:400;letter-spacing:0px;white-space:nowrap;">1</div>
<div style="position:absolute;left:1652px;top:463px;width:172.79999999999995px;height:37px;box-sizing:border-box;background:#ede9fe;border-radius:11px;"></div>
<div style="position:absolute;left:1652.00px;top:463.80px;height:35px;line-height:35px;font-size:22px;color:#6d28d9;font-weight:400;letter-spacing:0px;white-space:nowrap;width:172.79999999999995px;text-align:center;-webkit-text-stroke:0.25px #6d28d9;">Under Review</div>
<div style="position:absolute;left:1836.60px;top:463.80px;height:35px;line-height:35px;font-size:22px;color:#6b7280;font-weight:400;letter-spacing:0px;white-space:nowrap;">0</div>
<div style="position:absolute;left:1871px;top:463px;width:131px;height:37px;box-sizing:border-box;background:#d1fae5;border-radius:11px;"></div>
<div style="position:absolute;left:1871.00px;top:463.80px;height:35px;line-height:35px;font-size:22px;color:#047857;font-weight:400;letter-spacing:0px;white-space:nowrap;width:131px;text-align:center;-webkit-text-stroke:0.25px #047857;">Accepted</div>
<div style="position:absolute;left:2014.80px;top:463.80px;height:35px;line-height:35px;font-size:22px;color:#6b7280;font-weight:400;letter-spacing:0px;white-space:nowrap;">1</div>
<div style="position:absolute;left:2048px;top:463px;width:121.80000000000018px;height:37px;box-sizing:border-box;background:#fee2e2;border-radius:11px;"></div>
<div style="position:absolute;left:2048.00px;top:463.80px;height:35px;line-height:35px;font-size:22px;color:#b91c1c;font-weight:400;letter-spacing:0px;white-space:nowrap;width:121.80000000000018px;text-align:center;-webkit-text-stroke:0.25px #b91c1c;">Rejected</div>
<div style="position:absolute;left:2183.00px;top:463.80px;height:35px;line-height:35px;font-size:22px;color:#6b7280;font-weight:400;letter-spacing:0px;white-space:nowrap;">0</div>
<div style="position:absolute;left:2215.8px;top:463px;width:236.0px;height:37px;box-sizing:border-box;background:#ffedd5;border-radius:11px;"></div>
<div style="position:absolute;left:2215.80px;top:463.80px;height:35px;line-height:35px;font-size:22px;color:#c2410c;font-weight:400;letter-spacing:0px;white-space:nowrap;width:236.0px;text-align:center;-webkit-text-stroke:0.25px #c2410c;">Changes Requested</div>
<div style="position:absolute;left:2463.00px;top:463.80px;height:35px;line-height:35px;font-size:22px;color:#6b7280;font-weight:400;letter-spacing:0px;white-space:nowrap;">1</div>
<div style="position:absolute;left:902.5px;top:545px;width:1632.5px;height:701.5px;border-radius:20px;background:#fff;box-shadow:0 0 0 1.5px #eceef2,0 2px 3px rgba(0,0,0,0.06);overflow:hidden">
<div style="position:absolute;left:0;top:120px;width:100%;height:54.5px;background:#f6f7f9;border-bottom:1.5px solid #eceef2"></div>
<div style="position:absolute;left:0;top:278.75px;width:100%;height:1.5px;background:#f0f1f4"></div>
<div style="position:absolute;left:0;top:383.75px;width:100%;height:1.5px;background:#f0f1f4"></div>
<div style="position:absolute;left:0;top:488.75px;width:100%;height:1.5px;background:#f0f1f4"></div>
<div style="position:absolute;left:0;top:593.75px;width:100%;height:1.5px;background:#f0f1f4"></div>
</div>
<div style="position:absolute;left:945.50px;top:598.30px;height:36px;line-height:36px;font-size:23px;color:#111;font-weight:700;letter-spacing:0px;white-space:nowrap;">Participants</div>
<div style="position:absolute;left:1869.5px;top:589.25px;width:384px;height:54px;box-sizing:border-box;background:#fafbfc;border:1.5px solid #e5e7eb;border-radius:14px;box-shadow:0 1px 2px rgba(0,0,0,0.04);"></div>
<svg style="position:absolute;left:1885.5px;top:604px;width:24px;height:24px" viewBox="0 0 24 24" fill="none" stroke="#6b7280" stroke-width="2" stroke-linecap="round" stroke-linejoin="round"><circle cx="11" cy="11" r="8"/><path d="m21 21-4.3-4.3"/></svg>
<div style="position:absolute;left:1926.25px;top:596.30px;height:40px;line-height:40px;font-size:25px;color:#6b7280;font-weight:400;letter-spacing:0.38px;white-space:nowrap;">Search participants...</div>
<div style="position:absolute;left:2270.75px;top:589.25px;width:222.5px;height:54px;box-sizing:border-box;background:#fafbfc;border:1.5px solid #e5e7eb;border-radius:14px;box-shadow:0 1px 2px rgba(0,0,0,0.04);"></div>
<div style="position:absolute;left:2292.50px;top:596.50px;height:40px;line-height:40px;font-size:25px;color:#111;font-weight:400;letter-spacing:0px;white-space:nowrap;">All Statuses</div>
<svg style="position:absolute;left:2441px;top:599.5px;width:30px;height:30px" viewBox="0 0 24 24" fill="none" stroke="#6b7280" stroke-width="1.6" stroke-linecap="round" stroke-linejoin="round"><path d="m6 9 6 6 6-6"/></svg>
<div style="position:absolute;left:932px;top:678.75px;width:26px;height:26.5px;box-sizing:border-box;border:2px solid #222;border-radius:7px;background:#fff;box-shadow:0 1px 2px rgba(0,0,0,0.15);"></div>
<div style="position:absolute;left:999.00px;top:675.60px;height:34px;line-height:34px;font-size:21.5px;color:#6b7280;font-weight:400;letter-spacing:-0.1px;white-space:nowrap;">NAME</div>
<div style="position:absolute;left:1387.75px;top:675.60px;height:34px;line-height:34px;font-size:21.5px;color:#6b7280;font-weight:400;letter-spacing:-0.1px;white-space:nowrap;">CONTACT</div>
<div style="position:absolute;left:1776.00px;top:675.60px;height:34px;line-height:34px;font-size:21.5px;color:#6b7280;font-weight:400;letter-spacing:-0.1px;white-space:nowrap;">STATUS</div>
<div style="position:absolute;left:2081.75px;top:675.60px;height:34px;line-height:34px;font-size:21.5px;color:#6b7280;font-weight:400;letter-spacing:-0.1px;white-space:nowrap;">LATEST SUBMISSION</div>
<div style="position:absolute;left:2358.00px;top:675.60px;height:34px;line-height:34px;font-size:21.5px;color:#6b7280;font-weight:400;letter-spacing:-0.1px;white-space:nowrap;">ACTIONS</div>
<div style="position:absolute;left:932px;top:760.0px;width:26px;height:26.5px;box-sizing:border-box;border:2px solid #222;border-radius:7px;background:#fff;box-shadow:0 1px 2px rgba(0,0,0,0.15);"></div>
<div style="position:absolute;left:1000.00px;top:740.50px;height:40px;line-height:40px;font-size:25.5px;color:#0a0a0a;font-weight:400;letter-spacing:0px;white-space:nowrap;-webkit-text-stroke:0.2px #0a0a0a;">Contoso Ltd</div>
<div style="position:absolute;left:1000.00px;top:776.30px;height:35px;line-height:35px;font-size:22px;color:#6b7280;font-weight:400;letter-spacing:0.1px;white-space:nowrap;">CO-002</div>
<div style="position:absolute;left:1387.75px;top:738.80px;height:40px;line-height:40px;font-size:25.5px;color:#0a0a0a;font-weight:400;letter-spacing:0px;white-space:nowrap;-webkit-text-stroke:0.2px #0a0a0a;">Laura Webb</div>
<div style="position:absolute;left:1388.75px;top:772.50px;height:35px;line-height:35px;font-size:22px;color:#6b7280;font-weight:400;letter-spacing:0.05px;white-space:nowrap;">l.webb@contoso.com</div>
<div style="position:absolute;left:1776.25px;top:757.0px;width:138.75px;height:37px;box-sizing:border-box;background:#dbeafe;border-radius:11px;"></div>
<div style="position:absolute;left:1776.25px;top:758.00px;height:35px;line-height:35px;font-size:22px;color:#1d4ed8;font-weight:400;letter-spacing:0px;white-space:nowrap;width:138.75px;text-align:center;-webkit-text-stroke:0.25px #1d4ed8;">Submitted</div>
<div style="position:absolute;left:2082.75px;top:738.25px;height:36px;line-height:36px;font-size:22.5px;color:#0a0a0a;font-weight:400;letter-spacing:0px;white-space:nowrap;-webkit-text-stroke:0.15px #0a0a0a;">v1</div>
<div style="position:absolute;left:2082.75px;top:771.25px;height:35px;line-height:35px;font-size:22px;color:#6b7280;font-weight:400;letter-spacing:0px;white-space:nowrap;">Submitted 02 Mar 2026</div>
<div style="position:absolute;left:2359px;top:748.25px;width:130px;height:48px;box-sizing:border-box;border:1.5px solid #e5e7eb;border-radius:12px;background:#fff;box-shadow:0 1px 2px rgba(0,0,0,0.05);"></div>
<svg style="position:absolute;left:2372.75px;top:758.0px;width:28px;height:28px" viewBox="0 0 24 24" fill="none" stroke="#111" stroke-width="2" stroke-linecap="round" stroke-linejoin="round"><rect width="20" height="16" x="2" y="4" rx="2"/><path d="m22 7-8.97 5.7a1.94 1.94 0 0 1-2.06 0L2 7"/></svg>
<div style="position:absolute;left:2422.00px;top:754.50px;height:35px;line-height:35px;font-size:22px;color:#111;font-weight:400;letter-spacing:0px;white-space:nowrap;-webkit-text-stroke:0.25px #111;">Invite</div>
<div style="position:absolute;left:932px;top:865.0px;width:26px;height:26.5px;box-sizing:border-box;border:2px solid #222;border-radius:7px;background:#fff;box-shadow:0 1px 2px rgba(0,0,0,0.15);"></div>
<div style="position:absolute;left:1000.00px;top:845.50px;height:40px;line-height:40px;font-size:25.5px;color:#0a0a0a;font-weight:400;letter-spacing:0px;white-space:nowrap;-webkit-text-stroke:0.2px #0a0a0a;">Woodgrove Bank</div>
<div style="position:absolute;left:1000.00px;top:881.30px;height:35px;line-height:35px;font-size:22px;color:#6b7280;font-weight:400;letter-spacing:0.1px;white-space:nowrap;">WG-004</div>
<div style="position:absolute;left:1387.75px;top:843.80px;height:40px;line-height:40px;font-size:25.5px;color:#0a0a0a;font-weight:400;letter-spacing:0px;white-space:nowrap;-webkit-text-stroke:0.2px #0a0a0a;">Priya Sharma</div>
<div style="position:absolute;left:1388.75px;top:877.50px;height:35px;line-height:35px;font-size:22px;color:#6b7280;font-weight:400;letter-spacing:0.05px;white-space:nowrap;">p.sharma@woodgrove.com</div>
<div style="position:absolute;left:1776.25px;top:862.0px;width:104.5px;height:37px;box-sizing:border-box;background:#e0f2fe;border-radius:11px;"></div>
<div style="position:absolute;left:1776.25px;top:863.00px;height:35px;line-height:35px;font-size:22px;color:#0369a1;font-weight:400;letter-spacing:0px;white-space:nowrap;width:104.5px;text-align:center;-webkit-text-stroke:0.25px #0369a1;">Invited</div>
<div style="position:absolute;left:2082.75px;top:860.50px;height:35px;line-height:35px;font-size:22px;color:#6b7280;font-weight:400;letter-spacing:0px;white-space:nowrap;">No submission</div>
<div style="position:absolute;left:2359px;top:853.25px;width:130px;height:48px;box-sizing:border-box;border:1.5px solid #e5e7eb;border-radius:12px;background:#fff;box-shadow:0 1px 2px rgba(0,0,0,0.05);"></div>
<svg style="position:absolute;left:2372.75px;top:863.0px;width:28px;height:28px" viewBox="0 0 24 24" fill="none" stroke="#111" stroke-width="2" stroke-linecap="round" stroke-linejoin="round"><rect width="20" height="16" x="2" y="4" rx="2"/><path d="m22 7-8.97 5.7a1.94 1.94 0 0 1-2.06 0L2 7"/></svg>
<div style="position:absolute;left:2422.00px;top:859.50px;height:35px;line-height:35px;font-size:22px;color:#111;font-weight:400;letter-spacing:0px;white-space:nowrap;-webkit-text-stroke:0.25px #111;">Invite</div>
<div style="position:absolute;left:932px;top:970.0px;width:26px;height:26.5px;box-sizing:border-box;border:2px solid #222;border-radius:7px;background:#fff;box-shadow:0 1px 2px rgba(0,0,0,0.15);"></div>
<div style="position:absolute;left:1000.00px;top:950.50px;height:40px;line-height:40px;font-size:25.5px;color:#0a0a0a;font-weight:400;letter-spacing:0px;white-space:nowrap;-webkit-text-stroke:0.2px #0a0a0a;">Alpine Ski House</div>
<div style="position:absolute;left:1000.00px;top:986.30px;height:35px;line-height:35px;font-size:22px;color:#6b7280;font-weight:400;letter-spacing:0.1px;white-space:nowrap;">AS-005</div>
<div style="position:absolute;left:1387.75px;top:948.80px;height:40px;line-height:40px;font-size:25.5px;color:#0a0a0a;font-weight:400;letter-spacing:0px;white-space:nowrap;-webkit-text-stroke:0.2px #0a0a0a;">Thomas Eriksen</div>
<div style="position:absolute;left:1388.75px;top:982.50px;height:35px;line-height:35px;font-size:22px;color:#6b7280;font-weight:400;letter-spacing:0.05px;white-space:nowrap;">t.eriksen@alpineski.com</div>
<div style="position:absolute;left:1776.25px;top:967.0px;width:148.75px;height:37px;box-sizing:border-box;background:#f3f4f6;border-radius:11px;"></div>
<div style="position:absolute;left:1776.25px;top:968.00px;height:35px;line-height:35px;font-size:22px;color:#6b7280;font-weight:400;letter-spacing:0px;white-space:nowrap;width:148.75px;text-align:center;-webkit-text-stroke:0.25px #6b7280;">Not Started</div>
<div style="position:absolute;left:2082.75px;top:965.50px;height:35px;line-height:35px;font-size:22px;color:#6b7280;font-weight:400;letter-spacing:0px;white-space:nowrap;">No submission</div>
<div style="position:absolute;left:2359px;top:958.25px;width:130px;height:48px;box-sizing:border-box;border:1.5px solid #e5e7eb;border-radius:12px;background:#fff;box-shadow:0 1px 2px rgba(0,0,0,0.05);"></div>
<svg style="position:absolute;left:2372.75px;top:968.0px;width:28px;height:28px" viewBox="0 0 24 24" fill="none" stroke="#111" stroke-width="2" stroke-linecap="round" stroke-linejoin="round"><rect width="20" height="16" x="2" y="4" rx="2"/><path d="m22 7-8.97 5.7a1.94 1.94 0 0 1-2.06 0L2 7"/></svg>
<div style="position:absolute;left:2422.00px;top:964.50px;height:35px;line-height:35px;font-size:22px;color:#111;font-weight:400;letter-spacing:0px;white-space:nowrap;-webkit-text-stroke:0.25px #111;">Invite</div>
<div style="position:absolute;left:932px;top:1075.0px;width:26px;height:26.5px;box-sizing:border-box;border:2px solid #222;border-radius:7px;background:#fff;box-shadow:0 1px 2px rgba(0,0,0,0.15);"></div>
<div style="position:absolute;left:1000.00px;top:1055.50px;height:40px;line-height:40px;font-size:25.5px;color:#0a0a0a;font-weight:400;letter-spacing:0px;white-space:nowrap;-webkit-text-stroke:0.2px #0a0a0a;">Fabrikam Inc</div>
<div style="position:absolute;left:1000.00px;top:1091.30px;height:35px;line-height:35px;font-size:22px;color:#6b7280;font-weight:400;letter-spacing:0.1px;white-space:nowrap;">FB-003</div>
<div style="position:absolute;left:1387.75px;top:1053.80px;height:40px;line-height:40px;font-size:25.5px;color:#0a0a0a;font-weight:400;letter-spacing:0px;white-space:nowrap;-webkit-text-stroke:0.2px #0a0a0a;">David Kowalski</div>
<div style="position:absolute;left:1388.75px;top:1087.50px;height:35px;line-height:35px;font-size:22px;color:#6b7280;font-weight:400;letter-spacing:0.05px;white-space:nowrap;">d.kowalski@fabrikam.com</div>
<div style="position:absolute;left:1776.25px;top:1072.0px;width:236px;height:37px;box-sizing:border-box;background:#ffedd5;border-radius:11px;"></div>
<div style="position:absolute;left:1776.25px;top:1073.00px;height:35px;line-height:35px;font-size:22px;color:#c2410c;font-weight:400;letter-spacing:0px;white-space:nowrap;width:236px;text-align:center;-webkit-text-stroke:0.25px #c2410c;">Changes Requested</div>
<div style="position:absolute;left:2082.75px;top:1053.25px;height:36px;line-height:36px;font-size:22.5px;color:#0a0a0a;font-weight:400;letter-spacing:0px;white-space:nowrap;-webkit-text-stroke:0.15px #0a0a0a;">v1</div>
<div style="position:absolute;left:2082.75px;top:1086.25px;height:35px;line-height:35px;font-size:22px;color:#6b7280;font-weight:400;letter-spacing:0px;white-space:nowrap;">Submitted 02 Mar 2026</div>
<div style="position:absolute;left:2359px;top:1063.25px;width:130px;height:48px;box-sizing:border-box;border:1.5px solid #e5e7eb;border-radius:12px;background:#fff;box-shadow:0 1px 2px rgba(0,0,0,0.05);"></div>
<svg style="position:absolute;left:2372.75px;top:1073.0px;width:28px;height:28px" viewBox="0 0 24 24" fill="none" stroke="#111" stroke-width="2" stroke-linecap="round" stroke-linejoin="round"><rect width="20" height="16" x="2" y="4" rx="2"/><path d="m22 7-8.97 5.7a1.94 1.94 0 0 1-2.06 0L2 7"/></svg>
<div style="position:absolute;left:2422.00px;top:1069.50px;height:35px;line-height:35px;font-size:22px;color:#111;font-weight:400;letter-spacing:0px;white-space:nowrap;-webkit-text-stroke:0.25px #111;">Invite</div>
<div style="position:absolute;left:932px;top:1180.0px;width:26px;height:26.5px;box-sizing:border-box;border:2px solid #222;border-radius:7px;background:#fff;box-shadow:0 1px 2px rgba(0,0,0,0.15);"></div>
<div style="position:absolute;left:1000.00px;top:1160.50px;height:40px;line-height:40px;font-size:25.5px;color:#0a0a0a;font-weight:400;letter-spacing:0px;white-space:nowrap;-webkit-text-stroke:0.2px #0a0a0a;">Northwind Traders</div>
<div style="position:absolute;left:1000.00px;top:1196.30px;height:35px;line-height:35px;font-size:22px;color:#6b7280;font-weight:400;letter-spacing:0.1px;white-space:nowrap;">NW-001</div>
<div style="position:absolute;left:1387.75px;top:1158.80px;height:40px;line-height:40px;font-size:25.5px;color:#0a0a0a;font-weight:400;letter-spacing:0px;white-space:nowrap;-webkit-text-stroke:0.2px #0a0a0a;">James Chen</div>
<div style="position:absolute;left:1388.75px;top:1192.50px;height:35px;line-height:35px;font-size:22px;color:#6b7280;font-weight:400;letter-spacing:0.05px;white-space:nowrap;">james.chen@northwind.com</div>
<div style="position:absolute;left:1776.25px;top:1177.0px;width:131px;height:37px;box-sizing:border-box;background:#d1fae5;border-radius:11px;"></div>
<div style="position:absolute;left:1776.25px;top:1178.00px;height:35px;line-height:35px;font-size:22px;color:#047857;font-weight:400;letter-spacing:0px;white-space:nowrap;width:131px;text-align:center;-webkit-text-stroke:0.25px #047857;">Accepted</div>
<div style="position:absolute;left:2082.75px;top:1158.25px;height:36px;line-height:36px;font-size:22.5px;color:#0a0a0a;font-weight:400;letter-spacing:0px;white-space:nowrap;-webkit-text-stroke:0.15px #0a0a0a;">v1</div>
<div style="position:absolute;left:2082.75px;top:1191.25px;height:35px;line-height:35px;font-size:22px;color:#6b7280;font-weight:400;letter-spacing:0px;white-space:nowrap;">Submitted 02 Mar 2026</div>
<div style="position:absolute;left:2359px;top:1168.25px;width:130px;height:48px;box-sizing:border-box;border:1.5px solid #e5e7eb;border-radius:12px;background:#fff;box-shadow:0 1px 2px rgba(0,0,0,0.05);"></div>
<svg style="position:absolute;left:2372.75px;top:1178.0px;width:28px;height:28px" viewBox="0 0 24 24" fill="none" stroke="#111" stroke-width="2" stroke-linecap="round" stroke-linejoin="round"><rect width="20" height="16" x="2" y="4" rx="2"/><path d="m22 7-8.97 5.7a1.94 1.94 0 0 1-2.06 0L2 7"/></svg>
<div style="position:absolute;left:2422.00px;top:1174.50px;height:35px;line-height:35px;font-size:22px;color:#111;font-weight:400;letter-spacing:0px;white-space:nowrap;-webkit-text-stroke:0.25px #111;">Invite</div>
<div style="position:absolute;left:902.5px;top:1276.5px;width:1632.5px;height:400px;border-radius:20px;background:#fff;box-shadow:0 0 0 1.5px #eceef2,0 2px 3px rgba(0,0,0,0.06)"></div>
<div style="position:absolute;left:945.50px;top:1316.50px;height:36px;line-height:36px;font-size:22.5px;color:#111;font-weight:700;letter-spacing:0px;white-space:nowrap;">Reminder Rules</div>
<svg style="position:absolute;left:2465.5px;top:1321.5px;width:28px;height:28px" viewBox="0 0 24 24" fill="none" stroke="#6b7280" stroke-width="2" stroke-linecap="round" stroke-linejoin="round"><path d="m18 15-6-6-6 6"/></svg>
<div style="position:absolute;left:945.50px;top:1366.30px;height:36px;line-height:36px;font-size:22.5px;color:#6b7280;font-weight:400;letter-spacing:0px;white-space:nowrap;">Set up friendly follow-ups to help participants stay on track.</div>
<div style="position:absolute;left:945.5px;top:1439px;width:1548px;height:200px;box-sizing:border-box;background:#fff;border:1.5px solid #eef0f3;border-radius:12px;"></div>
<div style="position:absolute;left:967.70px;top:1458.30px;height:40px;line-height:40px;font-size:25.5px;color:#0a0a0a;font-weight:400;letter-spacing:0px;white-space:nowrap;-webkit-text-stroke:0.25px #0a0a0a;">Send 7 days before the deadline</div>
<div style="position:absolute;left:2285px;top:1462px;width:117px;height:80px;box-sizing:border-box;border:1.5px solid #e5e7eb;border-radius:12px;background:#fff;"></div>
<div style="position:absolute;left:2308.00px;top:1470.50px;height:36px;line-height:36px;font-size:22.5px;color:#111;font-weight:400;letter-spacing:0px;white-space:nowrap;-webkit-text-stroke:0.25px #111;">Disable</div>
<svg style="position:absolute;left:2429.5px;top:1474.5px;width:28px;height:28px" viewBox="0 0 24 24" fill="none" stroke="#111" stroke-width="2.8" stroke-linecap="round" stroke-linejoin="round"><circle cx="12" cy="12" r="1"/><circle cx="19" cy="12" r="1"/><circle cx="5" cy="12" r="1"/></svg>
</div></div>
</body></html>
